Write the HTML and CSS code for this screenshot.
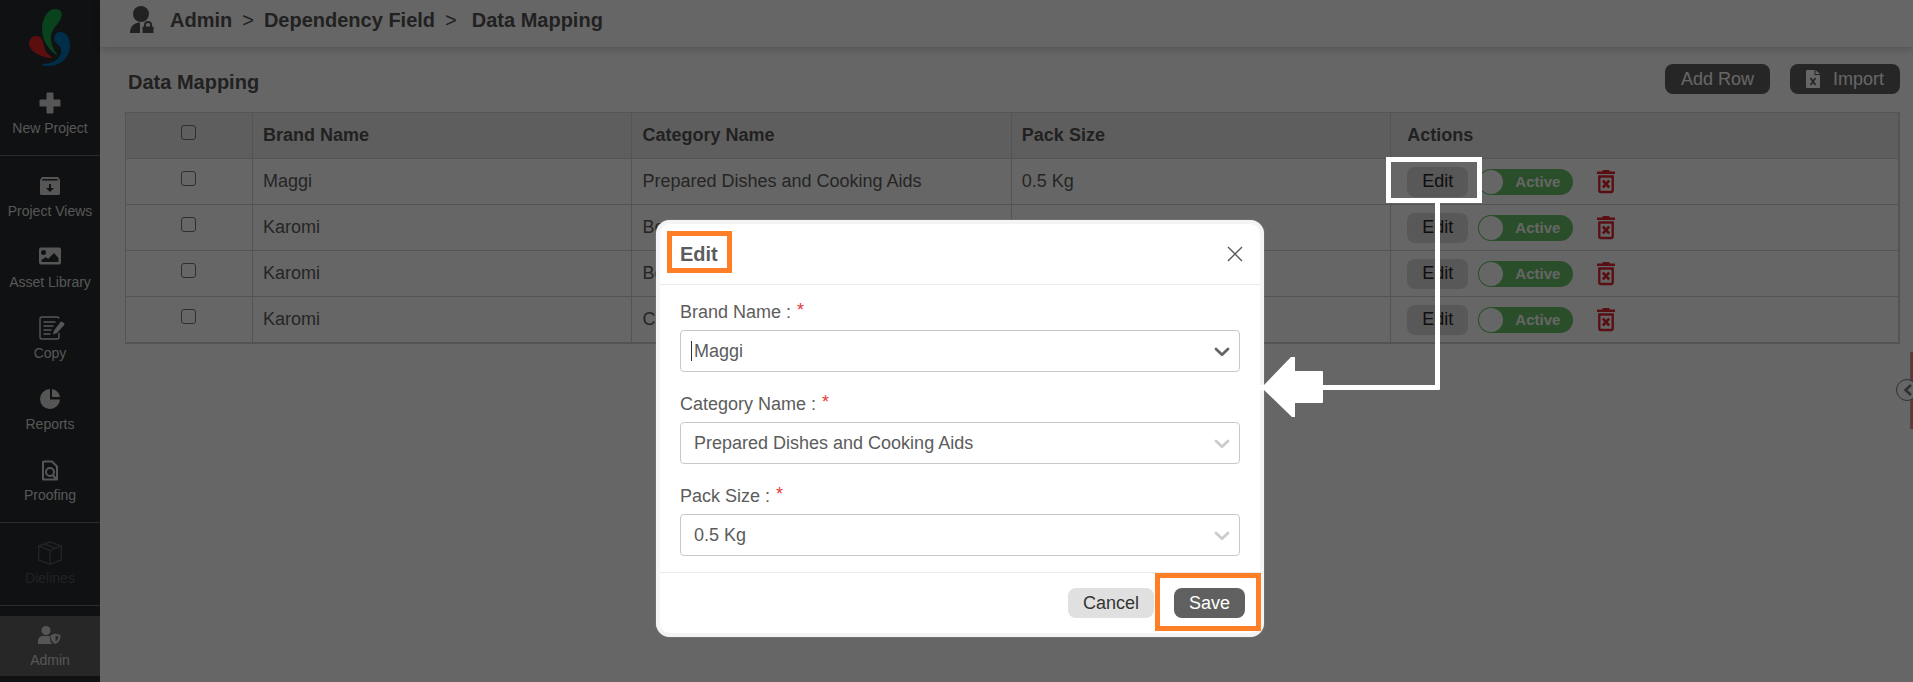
FILE: index.html
```html
<!DOCTYPE html>
<html lang="en">
<head>
    <meta charset="UTF-8">
    <meta name="viewport" content="width=device-width, initial-scale=1.0">
    <title>Data Mapping</title>
    <link rel="stylesheet" href="styles.css">
</head>
<body>

    <!-- Icons used more than once -->
    <svg class="icon-defs" aria-hidden="true">
        <symbol id="icon-trash" viewBox="0 0 18 24">
            <path d="M0 1.500h5l1-1.500h6l1 1.500h5V4H0z"/>
            <path d="M2.300 6.500h13.400v14a1.500 1.500 0 0 1-1.500 1.500H3.800a1.500 1.500 0 0 1-1.500-1.500z" fill="none" stroke="currentColor" stroke-width="2.400"/>
            <path d="M5.800 10.500l6.400 7M12.200 10.500l-6.400 7" fill="none" stroke="currentColor" stroke-width="2.600"/>
        </symbol>
        <symbol id="icon-chevron" viewBox="0 0 16 10">
            <path d="M2 2l6 5.800L14 2" fill="none" stroke="currentColor" stroke-width="2.800" stroke-linecap="round" stroke-linejoin="round"/>
        </symbol>
    </svg>

    <div class="app">
        <nav class="sidebar">
            <a href="#" class="logo" aria-label="Home">
                <svg width="42" height="58" viewBox="0 0 42 58">
                    <path fill="#17a84a" d="M26 0c6 0 8 4 6 9-2 6-9 10-10 18-.6 7 2 13 6 18 0 1-1 1-2 0C17 38 13 29 13 19 14 8 19 0 26 0z"/>
                    <path fill="#e02424" d="M7 27c7 0 7 7 9 13 1 4 4 6 7 8-1 2-4 1-7 0C7 46 1 41 0 35c0-5 3-8 7-8z"/>
                    <path fill="#0073b7" d="M31 23c7 0 10 6 10 14 0 12-10 20-22 20-3 0-6 0-6-2 8 0 17-3 19-11 1-4-1-7-4-9-5-4-3-12 3-12z"/>
                </svg>
            </a>
            <div class="nav-group">
                <a href="#" class="nav-item">
                    <svg class="nav-icon" viewBox="0 0 24 24"><path d="M9.500 1.500h5a1 1 0 0 1 1 1v6h6a1 1 0 0 1 1 1v5a1 1 0 0 1-1 1h-6v6a1 1 0 0 1-1 1h-5a1 1 0 0 1-1-1v-6h-6a1 1 0 0 1-1-1v-5a1 1 0 0 1 1-1h6v-6a1 1 0 0 1 1-1z"/></svg>
                    <span>New Project</span>
                </a>
            </div>
            <div class="nav-group">
                <a href="#" class="nav-item">
                    <svg class="nav-icon" viewBox="0 0 24 24"><path fill-rule="evenodd" d="M4 3h16l2 3v13.500a1.500 1.500 0 0 1-1.500 1.500h-17A1.500 1.500 0 0 1 2 19.500V6zM4.500 5l-.5 1.500h16L19.500 5zM11 10v4H8l4 4 4-4h-3v-4z"/></svg>
                    <span>Project Views</span>
                </a>
                <a href="#" class="nav-item">
                    <svg class="nav-icon" viewBox="0 0 24 24"><path fill-rule="evenodd" d="M3 2.500h18a2 2 0 0 1 2 2v13a2 2 0 0 1-2 2H3a2 2 0 0 1-2-2v-13a2 2 0 0 1 2-2zM5.500 5a2.500 2.500 0 1 0 0 5 2.500 2.500 0 0 0 0-5zM3.500 17h17v-4l-4.500-5-6 6-2-2-4.500 3z"/></svg>
                    <span>Asset Library</span>
                </a>
                <a href="#" class="nav-item">
                    <svg class="nav-icon" viewBox="0 0 24 24">
                        <path d="M21 17v4a2 2 0 0 1-2 2H4a2 2 0 0 1-2-2V3a2 2 0 0 1 2-2h15a2 2 0 0 1 2 1.500M5.500 6h12M5.500 10h10M5.500 14h8M5.500 18h7" fill="none" stroke="currentColor" stroke-width="1.400"/>
                        <path d="M15 18.500l1-4 6.500-8.500a1.300 1.300 0 0 1 2 0l1.500 1.200a1.300 1.300 0 0 1 0 2L19 17z"/>
                    </svg>
                    <span>Copy</span>
                </a>
                <a href="#" class="nav-item">
                    <svg class="nav-icon" viewBox="0 0 24 24"><path d="M12 2v10.500h10A10 10 0 1 1 12 2z"/><path d="M14 2a10 10 0 0 1 8 8h-8z"/></svg>
                    <span>Reports</span>
                </a>
                <a href="#" class="nav-item">
                    <svg class="nav-icon" viewBox="0 0 24 24"><path d="M6 3.500h8l5 5v13H5v-17a1 1 0 0 1 1-1zM14.500 17l4 4" fill="none" stroke="currentColor" stroke-width="2" stroke-linejoin="round"/><circle cx="12" cy="14" r="4" fill="none" stroke="currentColor" stroke-width="2"/></svg>
                    <span>Proofing</span>
                </a>
            </div>
            <div class="nav-group">
                <a href="#" class="nav-item disabled">
                    <svg class="nav-icon" viewBox="0 0 24 24"><path d="M12 .8L23.300 5v14L12 23.200.7 19V5zM.7 5L12 9.500 23.300 5M12 9.500v13.700M6.500 3l11 4.300" fill="none" stroke="currentColor" stroke-width="1.400"/></svg>
                    <span>Dielines</span>
                </a>
            </div>
            <a href="#" class="nav-item active">
                <svg class="nav-icon" viewBox="0 0 24 24"><circle cx="8" cy="7.500" r="4.500"/><path d="M0 21v-2c0-4 2-6 5-6h6.500l.5 2c0 2.500.6 4.500 2 6z"/><path fill-rule="evenodd" d="M17.500 10.500l5 1.800c.2 4-1.500 7-5 8.700-3.500-1.700-5.200-4.700-5-8.700zm0 2v6.200c2-1.300 3-3 3-5.100z"/></svg>
                <span>Admin</span>
            </a>
        </nav>

        <main class="main">
            <header class="topbar">
                <svg class="topbar-icon" width="24" height="28" viewBox="0 0 24 28">
                    <circle cx="11" cy="8" r="8"/>
                    <path d="M0 27c0-6 3-10 10-10.500V27z"/>
                    <path fill-rule="evenodd" d="M12.500 20.500H14V19a4 4 0 0 1 8 0v1.500h1.500V27h-11zm3.500 0h4V19a2 2 0 0 0-4 0z"/>
                </svg>
                <a href="#">Admin</a>
                <span class="sep">&gt;</span>
                <a href="#">Dependency Field</a>
                <span class="sep">&gt;</span>
                <a href="#" class="current">Data Mapping</a>
            </header>

            <section class="content">
                <div class="toolbar">
                    <h1>Data Mapping</h1>
                    <button type="button" class="btn btn-dark">Add Row</button>
                    <button type="button" class="btn btn-dark">
                        <svg width="14" height="18" viewBox="0 0 14 18"><path fill="#fff" d="M1 0h7.500v5H14v12a1 1 0 0 1-1 1H1a1 1 0 0 1-1-1V1a1 1 0 0 1 1-1z"/><path fill="#fff" d="M9.500 0L14 4H9.500z"/><path d="M4.500 8l5 7M9.500 8l-5 7" stroke="#606060" stroke-width="1.800"/></svg>
                        Import
                    </button>
                </div>

                <table class="mapping">
                    <thead>
                        <tr>
                            <th class="col-check"><input type="checkbox" aria-label="Select all rows"></th>
                            <th class="col-data">Brand Name</th>
                            <th class="col-data">Category Name</th>
                            <th class="col-data">Pack Size</th>
                            <th class="col-actions">Actions</th>
                        </tr>
                    </thead>
                    <tbody>
                        <tr>
                            <td class="col-check"><input type="checkbox" aria-label="Select row 1"></td>
                            <td>Maggi</td>
                            <td>Prepared Dishes and Cooking Aids</td>
                            <td>0.5 Kg</td>
                            <td class="col-actions">
                                <div class="actions">
                                    <button type="button" class="btn btn-light">Edit</button>
                                    <label class="toggle"><input type="checkbox" checked>Active</label>
                                    <button type="button" class="delete" aria-label="Delete"><svg width="18" height="24"><use href="#icon-trash"/></svg></button>
                                </div>
                            </td>
                        </tr>
                        <tr>
                            <td class="col-check"><input type="checkbox" aria-label="Select row 2"></td>
                            <td>Karomi</td>
                            <td>Beverages</td>
                            <td>0.5 Kg</td>
                            <td class="col-actions">
                                <div class="actions">
                                    <button type="button" class="btn btn-light">Edit</button>
                                    <label class="toggle"><input type="checkbox" checked>Active</label>
                                    <button type="button" class="delete" aria-label="Delete"><svg width="18" height="24"><use href="#icon-trash"/></svg></button>
                                </div>
                            </td>
                        </tr>
                        <tr>
                            <td class="col-check"><input type="checkbox" aria-label="Select row 3"></td>
                            <td>Karomi</td>
                            <td>Beverages</td>
                            <td>0.5 Kg</td>
                            <td class="col-actions">
                                <div class="actions">
                                    <button type="button" class="btn btn-light">Edit</button>
                                    <label class="toggle"><input type="checkbox" checked>Active</label>
                                    <button type="button" class="delete" aria-label="Delete"><svg width="18" height="24"><use href="#icon-trash"/></svg></button>
                                </div>
                            </td>
                        </tr>
                        <tr>
                            <td class="col-check"><input type="checkbox" aria-label="Select row 4"></td>
                            <td>Karomi</td>
                            <td>Cereals</td>
                            <td>0.5 Kg</td>
                            <td class="col-actions">
                                <div class="actions">
                                    <button type="button" class="btn btn-light">Edit</button>
                                    <label class="toggle"><input type="checkbox" checked>Active</label>
                                    <button type="button" class="delete" aria-label="Delete"><svg width="18" height="24"><use href="#icon-trash"/></svg></button>
                                </div>
                            </td>
                        </tr>
                    </tbody>
                </table>
            </section>

            <!-- Side drawer handle -->
            <div class="drawer-edge"></div>
            <button type="button" class="drawer-handle" aria-label="Open panel">
                <svg width="10" height="12" viewBox="0 0 10 12"><path d="M8 1L2.500 6 8 11" fill="none" stroke="currentColor" stroke-width="2.500"/></svg>
            </button>
        </main>
    </div>

    <div class="backdrop">
        <form class="modal" role="dialog" aria-labelledby="modalTitle">
            <div class="modal-header">
                <h2 id="modalTitle">Edit</h2>
                <button type="button" class="close" aria-label="Close">
                    <svg width="16" height="16" viewBox="0 0 16 16"><path d="M1 1l14 14M15 1L1 15" stroke="currentColor" stroke-width="1.400"/></svg>
                </button>
            </div>
            <div class="modal-body">
                <div class="field">
                    <label for="brand">Brand Name :<span class="required">*</span></label>
                    <div class="select-box focused">
                        <select id="brand"><option>Maggi</option><option>Karomi</option></select>
                        <svg class="chevron" width="16" height="10"><use href="#icon-chevron"/></svg>
                    </div>
                </div>
                <div class="field">
                    <label for="category">Category Name :<span class="required">*</span></label>
                    <div class="select-box">
                        <select id="category"><option>Prepared Dishes and Cooking Aids</option></select>
                        <svg class="chevron" width="16" height="10"><use href="#icon-chevron"/></svg>
                    </div>
                </div>
                <div class="field">
                    <label for="pack">Pack Size :<span class="required">*</span></label>
                    <div class="select-box">
                        <select id="pack"><option>0.5 Kg</option></select>
                        <svg class="chevron" width="16" height="10"><use href="#icon-chevron"/></svg>
                    </div>
                </div>
            </div>
            <div class="modal-footer">
                <button type="button" class="btn btn-cancel">Cancel</button>
                <button type="submit" class="btn btn-dark">Save</button>
            </div>
        </form>
    </div>

    <!-- Callouts -->
    <div class="callout callout-title"></div>
    <div class="callout callout-save"></div>
    <div class="callout callout-edit"></div>
    <svg class="callout-arrow" width="180" height="218" viewBox="0 0 180 218">
        <path d="M175 0h5v189a1 1 0 0 1-1 1H63v12a1 1 0 0 1-1 1H35v14h-3L4 190H0v-5h4l27-28h4v14h27a1 1 0 0 1 1 1v13h112z" fill="#fff"/>
    </svg>

</body>
</html>
```

FILE: styles.css
```css
* {
    box-sizing: border-box;
}

body {
    margin: 0;
    font-family: "Liberation Sans", Arial, sans-serif;
    font-size: 18px;
    color: #5c5c5c;
    background: #fff;
    overflow: hidden;
}

a {
    color: inherit;
    text-decoration: none;
}

button, select {
    font: inherit;
    cursor: pointer;
}

svg {
    display: block;
    fill: currentColor;
}

.icon-defs {
    position: absolute;
    width: 0;
    height: 0;
}

.app {
    display: flex;
    min-height: 100vh;
}

/* Sidebar */
.sidebar {
    width: 100px;
    flex-shrink: 0;
    background: #262b2f;
    color: #d8d8d8;
    font-size: 14px;
}

.logo {
    display: flex;
    justify-content: center;
    height: 73px;
    padding-top: 9px;
}

.nav-group {
    padding: 5px 0 6px;
    border-bottom: 1px solid #6a6c6e;
}

.nav-item {
    display: flex;
    flex-direction: column;
    align-items: center;
    gap: 4px;
    padding: 13px 0 12px;
    line-height: 18px;
}

.nav-icon {
    width: 24px;
    height: 24px;
    overflow: visible;
}

.nav-item.disabled {
    color: #54585c;
}

.nav-item.active {
    margin-top: 10px;
    padding: 7px 0;
    background: #626262;
}

/* Header */
.main {
    position: relative;
    flex: 1;
    min-width: 0;
}

.topbar {
    display: flex;
    align-items: center;
    height: 47px;
    padding: 0 30px 7px;
    font-size: 20px;
    font-weight: bold;
    color: #545454;
    box-shadow: 0 2px 8px rgba(0, 0, 0, 0.2);
}

.topbar-icon {
    margin-right: 16px;
}

.sep {
    margin: 0 10px;
    font-weight: normal;
}

.current {
    margin-left: 5px;
}

/* Content */
.content {
    padding: 17px 13px 0 25px;
}

.toolbar {
    display: flex;
    align-items: center;
    gap: 20px;
    margin-bottom: 18px;
}

.toolbar h1 {
    flex: 1;
    margin: 0;
    padding: 5px 0 0 3px;
    font-size: 20px;
    line-height: 24px;
    color: #545454;
}

.btn {
    display: flex;
    align-items: center;
    gap: 13px;
    height: 30px;
    padding: 0 15px;
    border: none;
    border-radius: 8px;
}

.toolbar .btn {
    padding: 0 16px;
}

.btn-dark {
    background: #606060;
    color: #fff;
}

.btn-light {
    background: #dcdcdc;
    color: #262626;
}

.btn-cancel {
    background: #e0e0e0;
    color: #333;
}

.mapping {
    width: 100%;
    table-layout: fixed;
    border-collapse: separate;
    border-spacing: 0;
    border-right: 2px solid #d2d2d2;
    border-bottom: 2px solid #d2d2d2;
}

.mapping th, .mapping td {
    height: 46px;
    padding: 0 10px;
    border-top: 1px solid #d2d2d2;
    border-left: 1px solid #d2d2d2;
    text-align: left;
}

.mapping th {
    background: #ececec;
    color: #545454;
}

.mapping .col-check {
    width: 127px;
    padding: 0 12px 6px 10px;
}

.col-data {
    width: 21.4%;
}

.mapping .col-actions {
    padding: 0 16px;
}

.col-check input {
    appearance: none;
    display: block;
    width: 15px;
    height: 15px;
    margin: 0 auto;
    border: 1px solid #767676;
    border-radius: 3px;
}

.actions {
    display: flex;
    align-items: center;
    gap: 10px;
}

.toggle {
    display: flex;
    align-items: center;
    gap: 12px;
    width: 95px;
    height: 26px;
    padding: 0 1px;
    border-radius: 13px;
    background: #66c267;
    color: #fff;
    font-size: 15px;
    font-weight: bold;
}

.toggle input {
    appearance: none;
    width: 24px;
    height: 24px;
    margin: 0;
    border-radius: 50%;
    background: #fff;
}

.delete {
    margin-left: 14px;
    padding: 0;
    border: none;
    background: none;
    color: #dc2a30;
}

.drawer-edge {
    position: absolute;
    top: 352px;
    right: 0;
    width: 3px;
    height: 77px;
    border-left: 1px solid #b8b8b8;
    background: #f58a80;
}

.drawer-handle {
    position: absolute;
    top: 379px;
    right: -5px;
    width: 22px;
    height: 22px;
    padding: 0 0 0 6px;
    border: 1px solid #777;
    border-radius: 50%;
    background: #fff;
    color: #777;
}

/* Edit dialog */
.backdrop {
    position: absolute;
    inset: 0;
    display: flex;
    justify-content: center;
    align-items: flex-start;
    padding: 220px 0 0 7px;
    background: rgba(0, 0, 0, 0.6);
}

.modal {
    width: 608px;
    border: 4px solid #f4f4f4;
    border-radius: 14px;
    background: #fff;
    box-shadow: 0 0 1px #ccc;
}

.modal-header {
    display: flex;
    align-items: center;
    justify-content: space-between;
    height: 61px;
    padding: 0 17px 0 20px;
    border-bottom: 1px solid #ececec;
}

.modal-header h2 {
    margin: 0;
    font-size: 20px;
}

.close {
    padding: 0;
    border: none;
    background: none;
    color: #555;
}

.modal-body {
    display: flex;
    flex-direction: column;
    gap: 20px;
    padding: 15px 20px 16px;
}

.field label {
    display: flex;
    height: 30px;
    line-height: 24px;
}

.required {
    margin-left: 6px;
    line-height: 20px;
    color: #e53935;
}

.select-box {
    position: relative;
}

.select-box select {
    appearance: none;
    display: block;
    width: 100%;
    height: 42px;
    padding: 0 40px 0 13px;
    border: 1px solid #c8c8c8;
    border-radius: 4px;
    background: #fff;
    color: #5c5c5c;
}

.chevron {
    position: absolute;
    top: 17px;
    right: 10px;
    color: #ccc;
    pointer-events: none;
}

.focused .chevron {
    color: #666;
}

/* Text cursor */
.focused::before {
    content: "";
    position: absolute;
    top: 11px;
    left: 11px;
    width: 1px;
    height: 20px;
    background: #333;
}

.modal-footer {
    display: flex;
    justify-content: flex-end;
    gap: 20px;
    padding: 15px;
    border-top: 1px solid #ececec;
}

/* Callouts */
.callout {
    position: absolute;
    border: 5px solid #ff7f27;
}

.callout-title {
    top: 231px;
    left: 667px;
    width: 65px;
    height: 42px;
}

.callout-save {
    top: 573px;
    left: 1155px;
    width: 106px;
    height: 58px;
}

.callout-edit {
    top: 157px;
    left: 1386px;
    width: 96px;
    height: 46px;
    border-color: #fff;
}

.callout-arrow {
    position: absolute;
    top: 200px;
    left: 1260px;
}
```
